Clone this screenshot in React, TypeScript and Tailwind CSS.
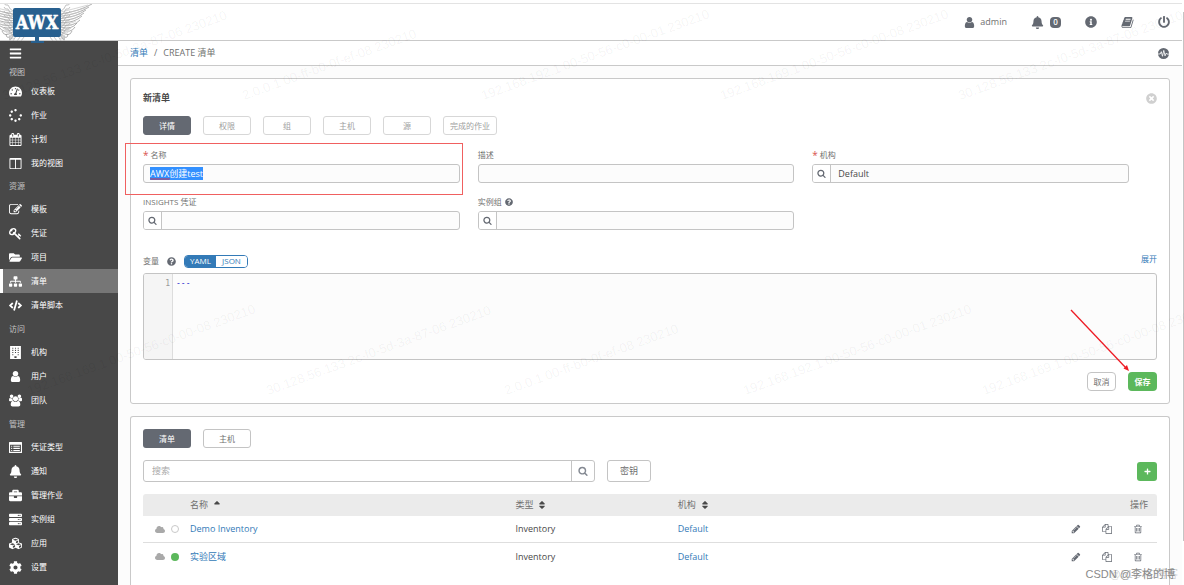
import React, { useEffect, useRef, useState } from 'react';
import {
  FaTachometerAlt, FaSpinner, FaFolderOpen, FaSitemap, FaCode, FaBell, FaBriefcase, FaServer, FaCubes, FaCog,
  FaInfoCircle, FaPowerOff, FaQuestionCircle, FaTimesCircle, FaCloud, FaBars, FaSort, FaSortUp, FaPlus,
} from 'react-icons/fa';

type IconProps = { className?: string };

const glyph = (d: string, width = 1792) =>
  function Glyph({ className }: IconProps) {
    return (
      <svg viewBox={`0 0 ${width} 1792`} fill="currentColor" className={className} aria-hidden="true">
        <path d={d} />
      </svg>
    );
  };

const Calendar = glyph('M192 1664h288v-288h-288v288zm352 0h320v-288h-320v288zm-352-352h288v-320h-288v320zm352 0h320v-320h-320v320zm-352-384h288v-288h-288v288zm736 736h320v-288h-320v288zm-384-736h320v-288h-320v288zm768 736h288v-288h-288v288zm-384-352h320v-320h-320v320zm-352-864v-288q0-13-9.5-22.5t-22.5-9.5h-64q-13 0-22.5 9.5t-9.5 22.5v288q0 13 9.5 22.5t22.5 9.5h64q13 0 22.5-9.5t9.5-22.5zm736 864h288v-320h-288v320zm-384-384h320v-288h-320v288zm384 0h288v-288h-288v288zm32-480v-288q0-13-9.5-22.5t-22.5-9.5h-64q-13 0-22.5 9.5t-9.5 22.5v288q0 13 9.5 22.5t22.5 9.5h64q13 0 22.5-9.5t9.5-22.5zm384-64v1280q0 52-38 90t-90 38h-1408q-52 0-90-38t-38-90v-1280q0-52 38-90t90-38h128v-96q0-66 47-113t113-47h64q66 0 113 47t47 113v96h384v-96q0-66 47-113t113-47h64q66 0 113 47t47 113v96h128q52 0 90 38t38 90z');
const Columns = glyph('M160 1536h608v-1152h-640v1120q0 13 9.5 22.5t22.5 9.5zm1376-32v-1120h-640v1152h608q13 0 22.5-9.5t9.5-22.5zm128-1216v1216q0 66-47 113t-113 47h-1344q-66 0-113-47t-47-113v-1216q0-66 47-113t113-47h1344q66 0 113 47t47 113z', 1664);
const Edit = glyph('M888 1184l116-116-152-152-116 116v56h96v96h56zm440-720q-16-16-33 1l-350 350q-17 17-1 33t33-1l350-350q17-17 1-33zm80 594v190q0 119-84.5 203.5t-203.5 84.5h-832q-119 0-203.5-84.5t-84.5-203.5v-832q0-119 84.5-203.5t203.5-84.5h832q63 0 117 25 15 7 18 23 3 17-9 29l-49 49q-14 14-32 8-23-6-45-6h-832q-66 0-113 47t-47 113v832q0 66 47 113t113 47h832q66 0 113-47t47-113v-126q0-13 9-22l64-64q15-15 35-7t20 29zm-96-738l288 288-672 672h-288v-288zm444 132l-92 92-288-288 92-92q28-28 68-28t68 28l152 152q28 28 28 68t-28 68z');
const Key = glyph('M832 512q0-80-56-136t-136-56-136 56-56 136q0 42 19 83-41-19-83-19-80 0-136 56t-56 136 56 136 136 56 136-56 56-136q0-42-19-83 41 19 83 19 80 0 136-56t56-136zm851 704q0 17-49 66t-66 49q-9 0-28.5-16t-36.5-33-38.5-40-24.5-26l-96 96 220 220q28 28 28 68 0 42-39 81t-81 39q-40 0-68-28l-671-671q-176 131-365 131-163 0-265.5-102.5t-102.5-265.5q0-160 95-313t248-248 313-95q163 0 265.5 102.5t102.5 265.5q0 189-131 365l355 355 96-96q-3-3-26-24.5t-40-38.5-33-36.5-16-28.5q0-17 49-66t66-49q13 0 23 10 6 6 46 44.5t82 79.5 86.5 86 73 78 28.5 41z');
const User = glyph('M1536 1399q0 109-62.5 187t-150.5 78h-854q-88 0-150.5-78t-62.5-187q0-85 8.5-160.5t31.5-152 58.5-131 94-89 134.5-34.5q131 128 313 128t313-128q76 0 134.5 34.5t94 89 58.5 131 31.5 152 8.5 160.5zm-256-887q0 159-112.5 271.5t-271.5 112.5-271.5-112.5-112.5-271.5 112.5-271.5 271.5-112.5 271.5 112.5 112.5 271.5z');
const Users = glyph('M593 896q-162 5-265 128h-134q-82 0-138-40.5t-56-118.5q0-353 124-353 6 0 43.5 21t97.5 42.5 119 21.5q67 0 133-23-5 37-5 66 0 159 93 293zm1071 637q0 120-73 189.5t-194 69.5h-874q-121 0-194-69.5t-73-189.5q0-53 3.5-103.5t14-109 26.5-108.5 43-97.5 62-81 85.5-53.5 111.5-20q10 0 43 21.5t73 48 107 48 135 21.5 135-21.5 107-48 73-48 43-21.5q61 0 111.5 20t85.5 53.5 62 81 43 97.5 26.5 108.5 14 109 3.5 103.5zm-1024-1277q0 106-75 181t-181 75-181-75-75-181 75-181 181-75 181 75 75 181zm704 384q0 159-112.5 271.5t-271.5 112.5-271.5-112.5-112.5-271.5 112.5-271.5 271.5-112.5 271.5 112.5 112.5 271.5zm576 225q0 78-56 118.5t-138 40.5h-134q-103-123-265-128 93-134 93-293 0-29-5-66 66 23 133 23 59 0 119-21.5t97.5-42.5 43.5-21q124 0 124 353zm-128-609q0 106-75 181t-181 75-181-75-75-181 75-181 181-75 181 75 75 181z', 1920);
const Book = glyph('M1703 478q40 57 18 129l-275 906q-19 64-76.5 107.5t-122.5 43.5h-923q-77 0-148.5-53.5t-99.5-131.5q-24-67-2-127 0-4 3-27t4-37q1-8-3-21.5t-3-19.5q2-11 8-21t16.5-23.5 16.5-23.5q23-38 45-91.5t30-91.5q3-10 .5-30t-.5-28q3-11 17-28t17-23q21-36 42-92t25-90q1-9-2.5-32t.5-28q4-13 22-30.5t22-22.5q19-26 42.5-84.5t27.5-96.5q1-8-3-25.5t-2-26.5q2-8 9-18t18-23 17-21q8-12 16.5-30.5t15-35 16-36 19.5-32 26.5-23.5 36-11.5 47.5 5.5l-1 3q38-9 51-9h761q74 0 114 56t18 130l-274 906q-36 119-71.5 153.5t-128.5 34.5h-869q-27 0-38 15-11 16-1 43 24 70 144 70h923q29 0 56-15.5t35-41.5l300-987q7-22 5-57 38 15 59 43zm-1064 2q-4 13 2 22.5t20 9.5h608q13 0 25.5-9.5t16.5-22.5l21-64q4-13-2-22.5t-20-9.5h-608q-13 0-25.5 9.5t-16.5 22.5zm-83 256q-4 13 2 22.5t20 9.5h608q13 0 25.5-9.5t16.5-22.5l21-64q4-13-2-22.5t-20-9.5h-608q-13 0-25.5 9.5t-16.5 22.5z');
const Search = glyph('M1216 832q0-185-131.5-316.5t-316.5-131.5-316.5 131.5-131.5 316.5 131.5 316.5 316.5 131.5 316.5-131.5 131.5-316.5zm512 832q0 52-38 90t-90 38q-54 0-90-38l-343-342q-179 124-399 124-143 0-273.5-55.5t-225-150-150-225-55.5-273.5 55.5-273.5 150-225 225-150 273.5-55.5 273.5 55.5 225 150 150 225 55.5 273.5q0 220-124 399l343 343q37 37 37 90z');
const Pencil = glyph('M491 1536l91-91-235-235-91 91v107h128v128h107zm523-928q0-22-22-22-10 0-17 7l-542 542q-7 7-7 17 0 22 22 22 10 0 17-7l542-542q7-7 7-17zm-54-192l416 416-832 832h-416v-416zm683 96q0 53-37 90l-166 166-416-416 166-165q36-38 90-38 53 0 91 38l235 234q37 39 37 91z');
const Copy = glyph('M1696 384q40 0 68 28t28 68v1216q0 40-28 68t-68 28h-960q-40 0-68-28t-28-68v-288h-544q-40 0-68-28t-28-68v-672q0-40 20-88t48-76l408-408q28-28 76-48t88-20h416q40 0 68 28t28 68v328q68-40 128-40h416zm-544 213l-299 299h299v-299zm-640-384l-299 299h299v-299zm196 647l316-316v-416h-384v416q0 40-28 68t-68 28h-416v640h512v-256q0-40 20-88t48-76zm956 804v-1152h-384v416q0 40-28 68t-68 28h-416v640h896z');
const Trash = glyph('M704 736v576q0 14-9 23t-23 9h-64q-14 0-23-9t-9-23v-576q0-14 9-23t23-9h64q14 0 23 9t9 23zm256 0v576q0 14-9 23t-23 9h-64q-14 0-23-9t-9-23v-576q0-14 9-23t23-9h64q14 0 23 9t9 23zm256 0v576q0 14-9 23t-23 9h-64q-14 0-23-9t-9-23v-576q0-14 9-23t23-9h64q14 0 23 9t9 23zm128 724v-948h-896v948q0 22 7 40.5t14.5 27 10.5 8.5h832q3 0 10.5-8.5t14.5-27 7-40.5zm-672-1076h448l-48-117q-7-9-17-11h-317q-10 2-17 11zm928 32v64q0 14-9 23t-23 9h-96v948q0 83-47 143.5t-113 60.5h-832q-66 0-113-58.5t-47-141.5v-952h-96q-14 0-23-9t-9-23v-64q0-14 9-23t23-9h309l70-167q15-37 54-63t79-26h320q40 0 79 26t54 63l70 167h309q14 0 23 9t9 23z');

function Building({ className }: IconProps) {
  return (
    <svg viewBox="0 0 12 12" fill="currentColor" className={className} aria-hidden="true">
      <path fillRule="evenodd" d="M1 0h10v12H1zM3 1.500v1h1v-1zm2.500 0v1h1v-1zm2.500 0v1h1v-1zM3 3.500v1h1v-1zm2.500 0v1h1v-1zm2.500 0v1h1v-1zM3 5.500v1h1v-1zm2.500 0v1h1v-1zm2.500 0v1h1v-1zM3 7.500v1h1v-1zm2 2v1.500h2v-1.500zm3-2v1h1v-1z" />
    </svg>
  );
}

function ListBox({ className }: IconProps) {
  return (
    <svg viewBox="0 0 12 12" fill="currentColor" className={className} aria-hidden="true">
      <path fillRule="evenodd" d="M.5 1h11q.5 0 .5.5v9q0 .5-.5.5H.5q-.5 0-.5-.5v-9Q0 1 .5 1zM1 3.500V10h10V3.500zM2 4.300h1v1H2zm2 0h6v1H4zM2 6.300h1v1H2zm2 0h6v1H4zM2 8.300h1v1H2zm2 0h6v1H4z" />
    </svg>
  );
}

function Activity({ className }: IconProps) {
  return (
    <svg viewBox="0 0 12 12" className={className} aria-hidden="true">
      <circle cx="6" cy="6" r="6" fill="currentColor" />
      <path d="M0 6.500h2.400L3.600 4l1.300 5L6.300 2.600l1.400 6 1.200-3 .8 1H12" fill="none" stroke="#fff" strokeWidth=".9" />
    </svg>
  );
}

// feather tips from the top of the wing down
const tips = [[92, 4], [89, 7], [86, 10], [84, 13], [82, 16], [80, 20], [77, 23], [75, 27], [72, 31], [68, 34], [64, 37]];

function Wing() {
  return (
    <g fill="none" strokeWidth=".7">
      {tips.map(([x, y], i) => (
        <g key={y}>
          <path d={`M61 ${14 + i * 2.2}Q${(61 + x) / 2 + 3} ${y + 7} ${x} ${y}`} stroke="#8f8f8f" />
          <path d={`M61 ${12 + i * 2.2}Q${(61 + x) / 2 + 1} ${y + 4} ${x - 4} ${y + 1}`} stroke="#c4c4c4" />
        </g>
      ))}
      {[5, 9, 13, 17, 21, 25, 29].map(y => (
        <path key={y} d={`M61 ${y + 6}q3-1 5-6q3 1 4 -2`} stroke="#a8a8a8" />
      ))}
      <path d="M50 37l3 4M54 37l3 4M58 36l3 5M61 35l3 4" stroke="#b0b0b0" />
    </g>
  );
}

function Logo() {
  return (
    <svg viewBox="0 0 96 39" className="h-[39px] w-24 shrink-0 self-start" role="img" aria-label="AWX">
      <g transform="translate(0 -4)">
        <Wing />
        <g transform="translate(74 0) scale(-1 1)"><Wing /></g>
        <path d="M15 8h44q2 0 2 2v25q0 2-2 2H39v4h5v2H31v-2h4v-4H15q-2 0-2-2V10q0-2 2-2z" fill="#28608f" />
        <text x="37" y="29" textAnchor="middle" fill="#fff" stroke="#fff" strokeWidth=".5" className="font-['DejaVu_Serif_Condensed','DejaVu_Serif',serif] text-[18px] font-bold">AWX</text>
      </g>
    </svg>
  );
}

const sections = [
  { title: '视图', gap: '', items: [['仪表板', FaTachometerAlt], ['作业', FaSpinner], ['计划', Calendar], ['我的视图', Columns]] },
  { title: '资源', gap: 'mt-1 mb-1', items: [['模板', Edit], ['凭证', Key], ['项目', FaFolderOpen], ['清单', FaSitemap], ['清单脚本', FaCode]] },
  { title: '访问', gap: 'mt-[5px] mb-1', items: [['机构', Building], ['用户', User], ['团队', Users]] },
  { title: '管理', gap: 'mt-[5px] mb-1', items: [['凭证类型', ListBox], ['通知', FaBell], ['管理作业', FaBriefcase], ['实例组', FaServer], ['应用', FaCubes], ['设置', FaCog]] },
] as { title: string; gap: string; items: [string, React.ComponentType<IconProps>][] }[];

function Sidebar() {
  return (
    <nav className="w-[118px] shrink-0 bg-[#484848] text-[8px] text-white">
      <button aria-label="菜单" className="flex h-6 items-center pl-[9px]">
        <FaBars className="h-[13px] w-[13px]" />
      </button>
      {sections.map(section => (
        <div key={section.title}>
          <h2 className={`flex h-[14px] items-center pl-[9px] text-[#c4c4c4] ${section.gap}`}>{section.title}</h2>
          {section.items.map(([label, Icon]) => (
            <a
              key={label}
              href="#"
              className={`flex h-6 items-center gap-[9px] border-l-[3px] pl-[6px] ${label === '清单' ? 'border-white bg-[#767676]' : 'border-transparent'}`}
            >
              <Icon className="h-[13px] w-[13px]" />
              {label}
            </a>
          ))}
        </div>
      ))}
    </nav>
  );
}

function Header() {
  return (
    <header className="relative z-10 mt-[3px] mr-[2px] flex h-[38px] items-center justify-between border-t border-b border-t-[#e3e3e3] border-b-[#c9c9c9] bg-white text-[#646972]">
      <Logo />
      <div className="flex items-center pr-3">
        <a href="#" className="flex items-center gap-1 text-[9px] text-[#707070]">
          <User className="h-[13px] w-[13px] text-[#646972]" />
          admin
        </a>
        <button aria-label="通知" className="ml-6 flex items-center gap-[6px]">
          <FaBell className="h-[13px] w-[13px]" />
          <span className="flex h-[11px] w-[11px] items-center justify-center rounded-sm bg-[#646972] text-[8px] font-semibold text-white">0</span>
        </button>
        <button aria-label="关于" className="ml-6"><FaInfoCircle className="h-3 w-3" /></button>
        <button aria-label="文档" className="ml-6"><Book className="h-[13px] w-[13px]" /></button>
        <button aria-label="登出" className="ml-6"><FaPowerOff className="h-3 w-3" /></button>
      </div>
    </header>
  );
}

function Field({ id, label, required, help, lookup, children }: { id: string; label: string; required?: boolean; help?: boolean; lookup?: boolean; children?: React.ReactNode }) {
  return (
    <div>
      <label htmlFor={id} className="flex h-4 items-center gap-[2px] text-[8px] text-[#707070]">
        {required && <span className="text-[10px] leading-3 text-[#d9534f]">*</span>}
        {label}
        {help && <FaQuestionCircle className="ml-px h-2 w-2 text-[#646972]" />}
      </label>
      <div className="mt-px flex h-[19px] overflow-hidden rounded-[3px] border border-[#c4c4c4] bg-[#fcfcfc]">
        {lookup && (
          <button type="button" aria-label={`搜索${label}`} className="flex w-[18px] shrink-0 items-center justify-center border-r border-[#c4c4c4] bg-white text-[#646972]">
            <Search className="h-[9px] w-[9px]" />
          </button>
        )}
        {children ?? <input id={id} defaultValue={label === '机构' ? 'Default' : ''} className="min-w-0 flex-1 px-[7px] text-[9px] text-[#484848] outline-none" />}
      </div>
    </div>
  );
}

const formTabs = ['详情', '权限', '组', '主机', '源', '完成的作业'];

function InventoryForm() {
  const nameRef = useRef<HTMLInputElement>(null);
  const [mode, setMode] = useState('YAML');

  useEffect(() => {
    nameRef.current?.focus();
    nameRef.current?.select();
  }, []);

  return (
    <form onSubmit={e => e.preventDefault()} className="rounded-[3px] border border-[#c9c9c9] bg-white px-3 pt-[13px] pb-3">
      <div className="flex h-3 items-center justify-between">
        <h1 className="text-[9px] font-semibold text-[#484848]">新清单</h1>
        <button type="button" aria-label="关闭" className="text-[#d0d0d0]"><FaTimesCircle className="block h-[11px] w-[11px]" /></button>
      </div>
      <div className="mt-3 flex gap-3">
        {formTabs.map((tab, i) => (
          <button
            key={tab}
            type="button"
            className={`h-[19px] min-w-12 rounded-[3px] border px-[6px] text-[8px] ${i === 0 ? 'border-[#646972] bg-[#646972] text-white' : 'border-[#d7d7d7] bg-white text-[#a0a0a0]'}`}
          >
            {tab}
          </button>
        ))}
      </div>

      <div className="relative mt-3 grid grid-cols-3 gap-x-[18px] gap-y-[11px] pr-7">
        <Field id="name" label="名称" required>
          <div className="relative flex flex-1">
            <input
              id="name"
              ref={nameRef}
              defaultValue="AWX创建test"
              spellCheck={false}
              className="min-w-0 flex-1 px-[6px] text-[9px] text-[#484848] outline-none selection:bg-[#3390ff] selection:text-white"
            />
            <svg viewBox="0 0 20 2" className="absolute bottom-[2px] left-[6px] h-[2px] w-5" aria-hidden="true">
              <path d="M0 1.500l1-1 1 1 1-1 1 1 1-1 1 1 1-1 1 1 1-1 1 1 1-1 1 1 1-1 1 1 1-1 1 1 1-1 1 1 1-1 1 1" fill="none" stroke="#e0202c" strokeWidth="1" />
            </svg>
          </div>
        </Field>
        <Field id="description" label="描述" />
        <Field id="organization" label="机构" required lookup />
        <Field id="insights" label="INSIGHTS 凭证" lookup />
        <Field id="instance-groups" label="实例组" help lookup />
        {/* red frame around the name field */}
        <div className="pointer-events-none absolute -top-1 -left-[18px] h-[52px] w-[338px] border border-[#f06060]" />
      </div>

      <div className="mt-[23px] flex h-4 items-center text-[8px]">
        <label htmlFor="variables" className="text-[#707070]">变量</label>
        <FaQuestionCircle className="ml-2 h-[9px] w-[9px] text-[#646972]" />
        <div className="ml-2 flex h-[13px] overflow-hidden rounded-sm border border-[#337ab7]">
          {['YAML', 'JSON'].map(item => (
            <button
              key={item}
              type="button"
              onClick={() => setMode(item)}
              className={`flex w-[31px] items-center justify-center ${mode === item ? 'bg-[#337ab7] text-white' : 'bg-white text-[#337ab7]'}`}
            >
              {item}
            </button>
          ))}
        </div>
        <a href="#" className="ml-auto self-start text-[#337ab7]">展开</a>
      </div>
      <div className="mt-1 flex h-[87px] overflow-hidden rounded-[3px] border border-[#c4c4c4] bg-[#fcfcfc] font-['DejaVu_Sans_Mono',monospace] text-[8px] leading-5">
        <div className="w-[29px] shrink-0 border-r border-[#ddd] bg-[#f5f5f5] pr-[2px] text-right text-[#999]">1</div>
        <textarea id="variables" defaultValue="---" className="flex-1 resize-none px-[3px] text-[#2222cc] outline-none" />
      </div>
      <div className="relative mt-3 flex justify-end gap-3 text-[8px]">
        <button type="button" className="h-[19px] w-[29px] rounded-sm border border-[#c4c4c4] bg-white text-[#707070]">取消</button>
        <button type="submit" className="h-[19px] w-[29px] rounded-sm bg-[#5cb85c] font-semibold text-white">保存</button>
        <svg viewBox="0 0 60 63" className="pointer-events-none absolute right-[27px] bottom-[19px] h-[63px] w-[60px]" aria-hidden="true">
          <path d="M1 1L56 59" stroke="#ee1c25" strokeWidth="1.3" />
          <path d="M59 62l-5.500-2.500 3.500-3.500z" fill="#ee1c25" />
        </svg>
      </div>
    </form>
  );
}

const inventories = [
  { name: 'Demo Inventory', type: 'Inventory', org: 'Default', synced: false },
  { name: '实验区域', type: 'Inventory', org: 'Default', synced: true },
];

function InventoryList() {
  return (
    <section className="mt-3 flex-1 rounded-t-[3px] border border-b-0 border-[#c9c9c9] bg-white px-3 pt-3">
      <div className="flex gap-3 text-[8px]">
        <button className="h-[19px] w-12 rounded-[3px] bg-[#646972] text-white">清单</button>
        <button className="h-[19px] w-12 rounded-[3px] border border-[#c4c4c4] text-[#707070]">主机</button>
      </div>
      <div className="mt-3 flex items-center text-[9px]">
        <div className="flex h-[22px] w-[452px] rounded-[3px] border border-[#c4c4c4]">
          <input aria-label="搜索" placeholder="搜索" className="min-w-0 flex-1 px-2 outline-none placeholder:text-[#a9a9a9]" />
          <button aria-label="搜索" className="flex w-[23px] items-center justify-center border-l border-[#c4c4c4] text-[#848992]">
            <Search className="h-[10px] w-[10px]" />
          </button>
        </div>
        <button className="ml-3 h-[22px] w-11 rounded-[3px] border border-[#c4c4c4] text-[#707070]">密钥</button>
        <button aria-label="添加" className="ml-auto flex h-[19px] w-5 items-center justify-center rounded-[3px] bg-[#5cb85c] text-white">
          <FaPlus className="h-[7px] w-[7px]" />
        </button>
      </div>

      <table className="mt-3 w-full table-fixed border-separate border-spacing-0 text-left text-[9px] text-[#484848]">
        <colgroup>
          <col className="w-[47px]" />
          <col className="w-[32%]" />
          <col className="w-[16%]" />
          <col />
          <col className="w-[100px]" />
        </colgroup>
        <thead>
          <tr className="h-[22px] bg-[#ebebeb] text-[#707070]">
            <th className="rounded-tl-[3px]" />
            <th className="font-normal">
              <button className="flex items-center gap-[5px]">名称 <FaSortUp className="h-[10px] w-2 text-[#484848]" /></button>
            </th>
            <th className="pl-px font-normal">
              <button className="flex items-center gap-[5px]">类型 <FaSort className="h-[10px] w-2 text-[#484848]" /></button>
            </th>
            <th className="pl-px font-normal">
              <button className="flex items-center gap-[5px]">机构 <FaSort className="h-[10px] w-2 text-[#484848]" /></button>
            </th>
            <th className="rounded-tr-[3px] pr-[9px] text-right font-normal">操作</th>
          </tr>
        </thead>
        <tbody>
          {inventories.map((inv, i) => {
            const cell = i === 0 ? 'h-[27px] border-b border-[#dedede]' : 'h-[27px]';
            return (
              <tr key={inv.name}>
                <td className={cell}>
                  <div className="flex items-center gap-[6px] pl-3">
                    <FaCloud className="h-[9px] w-[10px] text-[#a9a9a9]" />
                    <span className={`h-2 w-2 rounded-full ${inv.synced ? 'bg-[#5cb85c]' : 'border border-[#c9c9c9]'}`} />
                  </div>
                </td>
                <td className={cell}><a href="#" className="text-[#337ab7]">{inv.name}</a></td>
                <td className={`pl-px ${cell}`}>{inv.type}</td>
                <td className={`pl-px ${cell}`}><a href="#" className="text-[#337ab7]">{inv.org}</a></td>
                <td className={cell}>
                  <div className="flex items-center justify-end gap-[21px] pr-[14px] text-[#646972]">
                    <button aria-label="编辑"><Pencil className="block h-[10px] w-[10px]" /></button>
                    <button aria-label="复制"><Copy className="block h-[10px] w-[10px]" /></button>
                    <button aria-label="删除"><Trash className="block h-[10px] w-[10px]" /></button>
                  </div>
                </td>
              </tr>
            );
          })}
        </tbody>
      </table>
    </section>
  );
}

// each mark is anchored at the left end of its baseline
const marks = [
  { x: 5, y: 102, text: '30.128.56.133 2c-f0-5d-3a-87-06 230210' },
  { x: 245, y: 102, text: '2.0.0.1 00-ff-b0-0f-ef-08 230210' },
  { x: 484, y: 102, text: '192.168.192.1 00-50-56-c0-00-01 230210' },
  { x: 723, y: 102, text: '192.168.169.1 00-50-56-c0-00-08 230210' },
  { x: 961, y: 102, text: '30.128.56.133 2c-f0-5d-3a-87-06 230210' },
  { x: 30, y: 397, text: '192.168.169.1 00-50-56-c0-00-08 230210' },
  { x: 269, y: 397, text: '30.128.56.133 2c-f0-5d-3a-87-06 230210' },
  { x: 507, y: 397, text: '2.0.0.1 00-ff-b0-0f-ef-08 230210' },
  { x: 746, y: 397, text: '192.168.192.1 00-50-56-c0-00-01 230210' },
  { x: 985, y: 397, text: '192.168.169.1 00-50-56-c0-00-08 230210' },
];

function Watermarks() {
  return (
    <div className="pointer-events-none absolute inset-0 z-20 overflow-hidden font-['Liberation_Sans','Noto_Sans_CJK_SC',sans-serif]" aria-hidden="true">
      {marks.map(mark => (
        <span
          key={`${mark.x}-${mark.y}`}
          className="absolute origin-bottom-left -translate-y-full -rotate-20 text-[13px] leading-3 whitespace-nowrap text-black/5"
          style={{ left: mark.x, top: mark.y }}
        >
          {mark.text}
        </span>
      ))}
      <span className="absolute right-[6px] bottom-[3px] text-[11px] leading-4 text-black/20">@51CTO博客</span>
      <span className="absolute right-[9px] bottom-[3px] text-[11px] leading-4 text-[#8a8a8a]">CSDN @李格的博</span>
    </div>
  );
}

export default function App() {
  return (
    <div className="relative flex h-screen flex-col overflow-hidden bg-white font-['Open_Sans','Noto_Sans_CJK_SC',sans-serif]">
      <Header />
      <div className="flex min-h-0 flex-1">
        <Sidebar />
        <main className="mr-[2px] flex min-w-0 flex-1 flex-col bg-[#fcfcfc]">
          <div className="flex h-[25px] shrink-0 items-center justify-between border-b border-[#c9c9c9] bg-white pr-[13px] pl-3 text-[9px] text-[#707070]">
            <nav className="flex gap-[6px]" aria-label="路径">
              <a href="#" className="text-[#337ab7]">清单</a>
              <span>/</span>
              <span>CREATE 清单</span>
            </nav>
            <button aria-label="活动流" className="text-[#646972]"><Activity className="block h-[11px] w-[11px]" /></button>
          </div>
          <div className="flex flex-1 flex-col px-3 pt-3">
            <InventoryForm />
            <InventoryList />
          </div>
        </main>
      </div>
      {/* scrollbar thumb */}
      <div className="absolute top-3 right-0 bottom-11 w-px bg-[#c4c4c4]" />
      <Watermarks />
    </div>
  );
}
